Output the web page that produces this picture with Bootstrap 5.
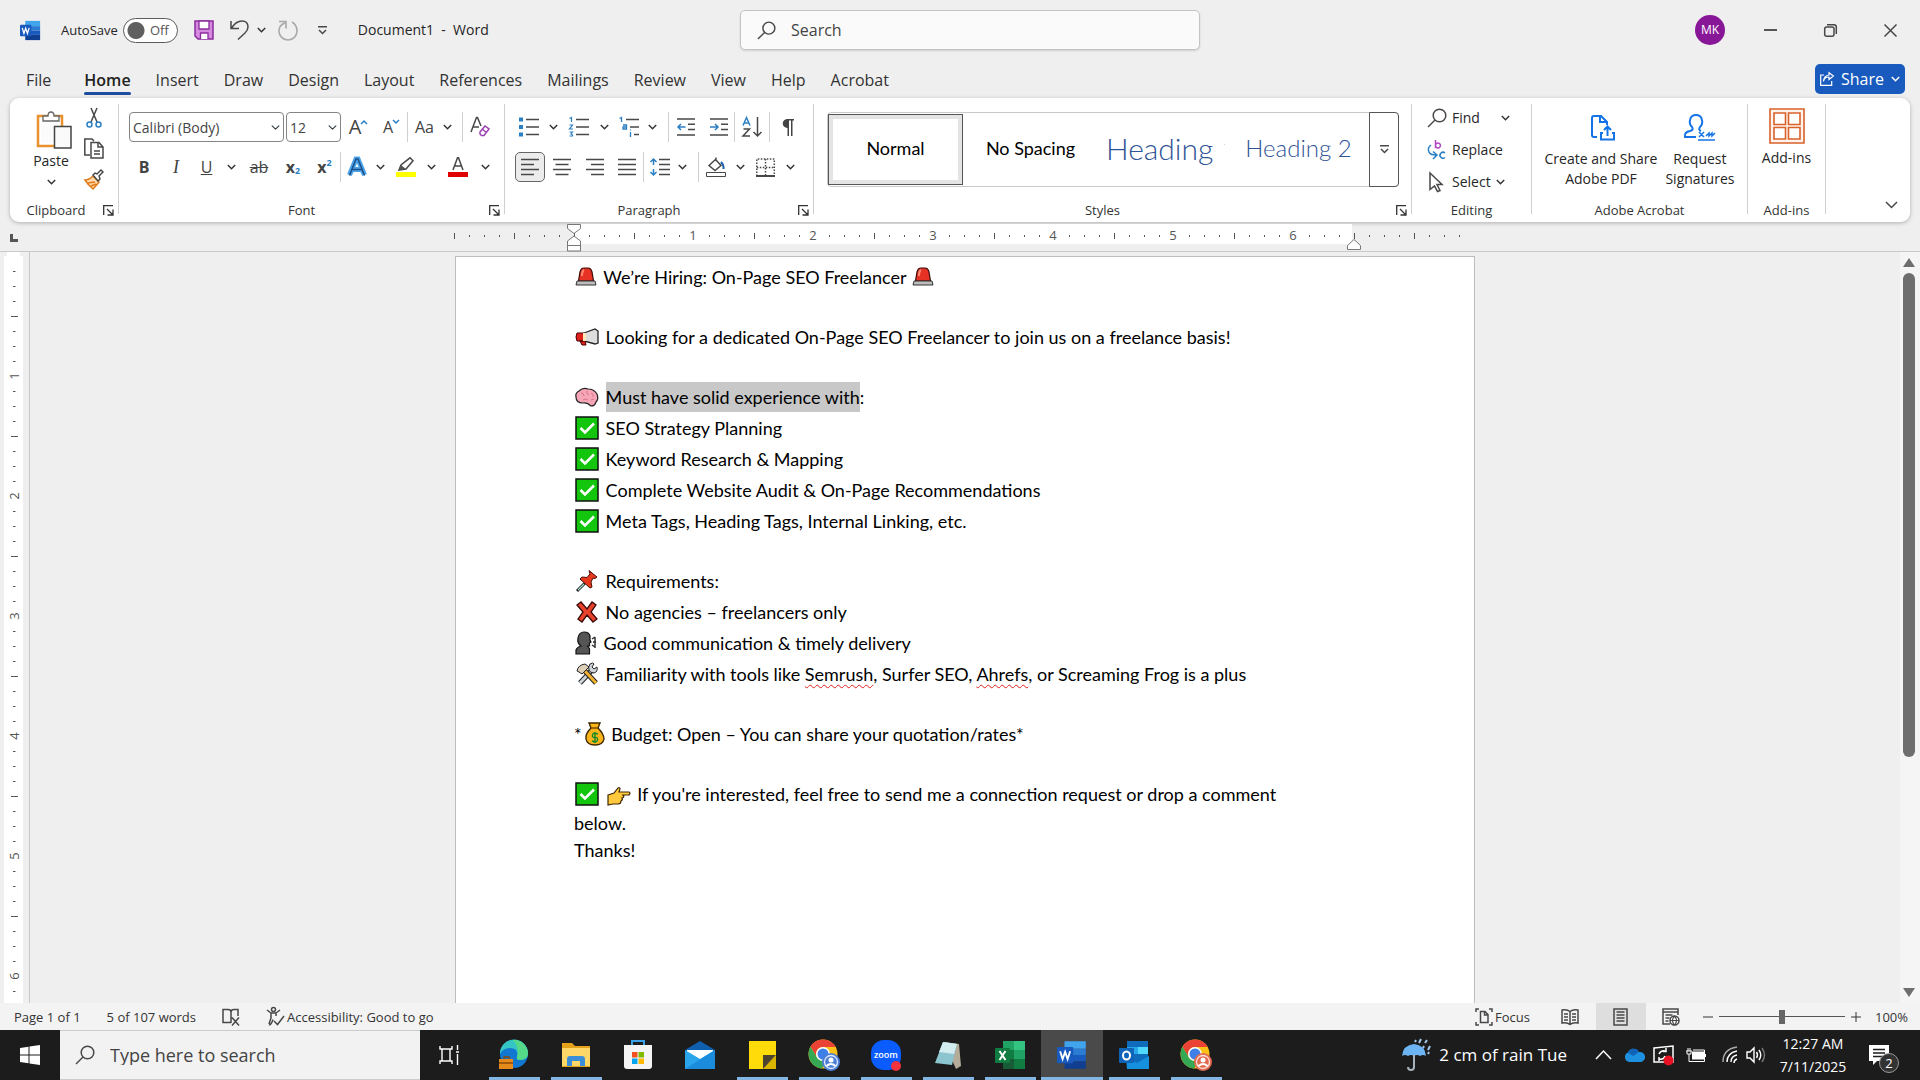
<!DOCTYPE html>
<html lang="en">
<head>
<meta charset="utf-8">
<meta name="viewport" content="width=device-width, initial-scale=1">
<title>Document1 - Word</title>
<link href="https://cdn.jsdelivr.net/npm/bootstrap@5.3.0/dist/css/bootstrap.min.css" rel="stylesheet">
<style>
:root{--ui:"Open Sans","Noto Sans",sans-serif;--doc:Lato,"Open Sans",sans-serif;--chrome:#efefef;--ink:#262626}
body{height:100vh;overflow:hidden;background:var(--chrome);font-family:var(--ui);font-size:14px;line-height:20px;color:var(--ink)}
svg{display:block;flex:none;overflow:visible}
button{color:inherit}
.tool{border:0;background:none;padding:0;display:inline-flex;align-items:center;justify-content:center}
.ln{fill:none;stroke:#484848;stroke-width:1.5}
.bl{stroke:#2b7fc3}
.chev{width:9px;height:6px;fill:none;stroke:#333;stroke-width:1.5}
.on-dark{stroke:#fff}
/* title bar */
.titlebar{height:60px;padding-left:20px}
.side{flex:1 1 0}
.autosave{font-size:13px;margin-left:20px;gap:5px}
.switch-box{appearance:none;width:55px;height:25px;margin:0;border:1px solid #5c5c5c;border-radius:13px;background:radial-gradient(circle at 12px 50%,#5f5f5f 8px,#fff 9px);display:block}
.switch-word{right:9px;top:2px;color:#555;pointer-events:none}
.quick{margin-left:16px}
.doc-name{margin-left:31px;font-size:14px}
.finder{width:460px;height:40px;background:#fafafa;border:1px solid #c4c4c4;border-radius:5px;padding-left:16px;gap:15px;box-shadow:0 1px 2px #0002}
.finder input,.task-search input{border:0;outline:0;background:none;padding:0;width:100%}
.finder input{font-size:16px}
.finder input::placeholder,.task-search input::placeholder{color:#444;opacity:1}
.win{width:60px;height:60px}
.avatar{width:30px;height:30px;border-radius:50%;background:#881798;color:#fff;font-size:12px}
/* tabs */
.tabs{height:38px;padding:4px 15px 4px 14px}
.tabs a{color:#333;text-decoration:none;font-size:16px;line-height:24px;padding:4px 13px 0 12px;height:32px}
.tabs a:first-child{margin-right:8px}
.tabs a.on{font-weight:600;color:#222}
.tabs a.on::after{content:"";display:block;height:3px;background:#1f4e9e;border-radius:2px}
.share{background:#185abd;color:#fff;width:90px;height:30px;border-radius:5px;font-size:16px;gap:7px}
/* ribbon */
.ribbon{margin:0 10px;height:124px;background:#fff;border-radius:9px;box-shadow:0 1px 4px #0004;padding:6px 0 8px;position:relative}
.grp{border-right:1px solid #cfcfcf;position:relative;display:flex;flex-direction:column;height:110px;flex:none}
.grp-name{margin-top:auto;text-align:center;font-size:13px;line-height:14px;padding-right:20px;margin-bottom:-3px;color:#333}
.grp-name.mid{padding-right:0}
.g-clip .grp-name{padding-right:16px}
.launch{position:absolute;right:4px;bottom:-2px}
.g-clip{width:109px}.g-font{width:386px}.g-para{width:309px}.g-style{width:598px}.g-edit{width:120px}.g-acro{width:216px}.g-add{width:78px}
.band{display:grid;align-items:center;justify-items:center;height:30px}
.band>.sep{width:1px;height:30px;background:#cfcfcf}
.font-a{margin-top:8px;padding-left:10px;grid-template-columns:155px 2px 55px 34px 32px 1px 33px 12px 9px 1px 34px}
.font-b{margin-top:10px;padding-left:9px;grid-template-columns:32px 32px 29px 20px 36px 32px 31px 1px 32px 14px 38px 12px 42px 12px}
.para-a{margin-top:8px;padding-left:9px;grid-template-columns:30px 18px 34px 16px 34px 12px 10px 1px 34px 31px 1px 34px 1px 34px}
.para-b{margin-top:10px;padding-left:10px;grid-template-columns:30px 34px 31px 33px 1px 32px 12px 10px 1px 34px 14px 36px 14px}
.band .form-select{height:30px;width:100%;padding:0 14px 0 3px;font-size:14px;font-family:var(--ui);border:1px solid #858585;border-radius:4px;background-size:9px;background-position:right 3px center;color:#444}
.band .picked{width:30px;height:30px;border:1px solid #666;border-radius:5px;background:#ececec}
.g16{font-size:16px;line-height:20px;color:#444}
.g20{font-size:20px;line-height:22px;color:#444}
.ital{font-family:"Liberation Serif",serif;font-size:18px}
.sup{font-size:9px;color:#2b7fc3}
.gallery{margin:8px 12px 0 13px;height:75px;border:1px solid #c9c9c9;border-radius:4px}
.tile{width:135px;height:71px;border:0;background:#fff;padding:0 8px 3px;margin-top:1px;font-family:var(--doc);font-size:18px;line-height:40px;color:#000;white-space:nowrap}
.tile span{display:block;overflow:hidden}
.tile.picked-style{border:1px solid #555;box-shadow:inset 0 0 0 4px #e4e4e4}
.tile.h-one{font-weight:300;font-size:30px;color:#2f5496;text-align:left}
.tile.h-two{font-weight:300;font-size:24px;color:#2f5496;padding:0 4px 3px 0}
.more{width:30px;height:75px;margin:-1px -1px 0 auto;border:1px solid #555;border-radius:0 4px 4px 0;background:#fff}
.edit-list{padding:4px 0 0 15px;gap:12px}
.edit-list button{gap:5px;height:20px;justify-content:flex-start}
.big{font-size:14px;line-height:20px;flex-direction:column}
.acro-pic{margin:2px 0 8px}
.collapse-rib{position:absolute;right:12px;bottom:13px}
/* rulers and page */
.hruler{height:30px;border-bottom:1px solid #c9c9c9;padding:0 20px 0 30px}
.corner-mark{left:10px;top:12px}
.vruler{width:30px;border-right:1px solid #c9c9c9;padding:4px 0 0 4px}
.vruler svg{height:100%}
.rnum{font:13px var(--ui);fill:#555;text-anchor:middle}
.desk{flex:1;min-height:0}
.sheet{width:1020px;margin-top:4px;background:#fff;border:1px solid #bdbdbd;border-bottom:0;padding:5px 110px 0 118px;font-family:var(--doc);font-size:18px;color:#000}
.sheet p{margin:0;line-height:31px;white-space:nowrap}
.sheet p.gap{height:29px}
.sheet p.tight{line-height:27px}
.emo{display:inline-block;width:24px;height:24px;margin:0 2px 0 1px;vertical-align:-5px}
.emo.slim{margin-right:0}
.picked-text{background:#c8c8c8;padding:4px 0}
.typo{text-decoration:underline wavy #e02020 1px;text-underline-offset:3px}
.vbar{width:20px;background:#f5f5f5;padding:6px 5px 6px 3px}
.vbar .thumb{width:12px;height:484px;border-radius:6px;background:#6e6e6e;margin-top:6px}
/* status bar */
.status{height:27px;background:#f3f3f3;font-size:13px;padding:0 12px 0 14px;color:#333}
.status button{font-size:13px;gap:2px;height:27px}
.st-next{margin-left:26px}
.st-read{margin:0 17px 0 31px}
.st-web{margin:0 23px 0 16px}
.st-pct{margin-left:14px}
.view-on{width:50px;background:#dedede!important}
.zoomer{appearance:none;width:126px;height:14px;background:linear-gradient(#555,#555) center/100% 1px no-repeat;margin:0 6px}
.zoomer::-webkit-slider-thumb{appearance:none;width:6px;height:14px;background:#666;border-radius:0}
/* task bar */
.taskbar{height:50px;background:#1c1c1c;color:#fff}
.task-search{width:360px;height:50px;background:#f2f2f2;border:1px solid #ccc;border-width:1px 0;padding-left:15px;gap:15px;color:#222}
.task-search input{font-size:18px}
.views{width:63px;height:50px;padding-right:4px}
.app{width:62px;height:50px;position:relative}
.app.open::after{content:"";position:absolute;left:6px;right:5px;bottom:0;height:3px;background:#83b6e2}
.app.now{background:#4a4a4a}
.app.now::after{left:0;right:0}
.tray{font-size:14px}
.weather{font-size:17px;gap:8px;margin-right:28px}
.clock{width:80px;line-height:23px;text-align:center;margin-left:7px}
.bell{margin:0 31px 0 16px}
.note-count{left:10px;top:8px;width:20px;height:20px;border-radius:50%;background:#333;border:1px solid #999;font-size:13px;line-height:18px;text-align:center}
</style>
<script src="https://cdn.jsdelivr.net/npm/bootstrap@5.3.0/dist/js/bootstrap.bundle.min.js"></script>
</head>
<body class="d-flex flex-column">
<svg width="0" height="0" class="position-absolute" aria-hidden="true">
<symbol id="cv" viewBox="0 0 9 6"><path d="M.8 1l3.700 3.700L8.200 1"/></symbol>
<symbol id="la" viewBox="0 0 11 11"><path d="M.7 10V.7H10M4 4l5.500 5.500M10 4.500V10H4.500" fill="none" stroke="#333" stroke-width="1.300"/></symbol>
<symbol id="mag" viewBox="0 0 20 20"><circle cx="12.500" cy="7.500" r="6.300"/><path d="M8 12L1 19"/></symbol>
<symbol id="tick" viewBox="0 0 24 24"><rect x="1" y="1" width="22" height="22" fill="#13c60d" stroke="#111" stroke-width="1.500"/><path d="M5.500 12l4.500 4.500L19 7.500" fill="none" stroke="#fff" stroke-width="2.600"/></symbol>
<symbol id="siren" viewBox="0 0 24 24"><path d="M3.500 16L5 7q1-4 4-4h4q3 0 4 4l1.500 9z" fill="#e53224" stroke="#3a0a08" stroke-width="1.200"/><path d="M9 5q-2 1-2 6" stroke="#ff8a70" stroke-width="2" fill="none"/><path d="M2 16h18l1 4H1z" fill="#bdbdbd" stroke="#333"/></symbol>
<symbol id="word" viewBox="0 0 24 24"><path d="M6 1h17v6H6z" fill="#41a5ee"/><path d="M6 7h17v5H6z" fill="#2b7cd3"/><path d="M6 12h17v5H6z" fill="#185abd"/><path d="M6 17h17v6H6z" fill="#103f91"/><rect y="5.500" width="13" height="13" rx="1" fill="#185abd"/><path d="M2.500 9l2 6.300L6.500 9.500l2 5.800 2-6.300" fill="none" stroke="#fff" stroke-width="1.500"/></symbol>
<symbol id="chrome" viewBox="0 0 32 32"><circle cx="15" cy="15" r="14.500" fill="#fbc116"/><path d="M2.500 7.800A14.500 14.500 0 0 1 27.700 8H15a7 7 0 0 0-6.300 10z" fill="#ea4335"/><path d="M2.500 7.800A14.500 14.500 0 0 0 14 29.500l6.500-11A7 7 0 0 1 8.700 18z" fill="#34a853"/><circle cx="15" cy="15" r="7" fill="#fff"/><circle cx="15" cy="15" r="5.500" fill="#3f7fe8"/></symbol>
<pattern id="hp" width="60" height="24" patternUnits="userSpaceOnUse"><path d="M.5 9v6M15.500 11v2M30.500 11v2M45.500 11v2" stroke="#555"/></pattern>
<pattern id="vp" width="20" height="60" patternUnits="userSpaceOnUse"><path d="M7 .5h7M9 15.500h2.500M9 30.500h2.500M9 45.500h2.500" stroke="#555"/></pattern>
</svg>

<header class="titlebar d-flex align-items-center">
  <div class="side d-flex align-items-center">
    <svg width="21" height="21"><use href="#word"/></svg>
    <label class="autosave d-flex align-items-center" for="auto"><span>AutoSave</span><span class="position-relative"><input class="switch-box" type="checkbox" id="auto"><span class="switch-word position-absolute">Off</span></span></label>
    <div class="quick d-flex align-items-center">
      <button class="tool" aria-label="Save"><svg width="20" height="20" viewBox="0 0 20 20"><path d="M1 1h18v18H4l-3-3z" fill="#d58ae0" stroke="#8a2c9c" stroke-width="1.500"/><path d="M5 1h10v8H5zM6.500 19v-6h7.500v6" fill="#fff" stroke="#8a2c9c" stroke-width="1.300"/></svg></button>
      <button class="tool ms-3" aria-label="Undo"><svg width="19" height="20" viewBox="0 0 19 20" class="ln"><path d="M1 1v7.500h8M1.500 8Q6 1 12 1t6 6q0 3-3 6l-7 6.500"/></svg></button>
      <button class="tool ms-2" aria-label="Undo list"><svg class="chev"><use href="#cv"/></svg></button>
      <button class="tool ms-2 ps-1" aria-label="Redo"><svg width="20" height="20" viewBox="0 0 20 20"><path d="M1 1.500h7v7M7 3Q1 5 1 11a9 9 0 0 0 18 0q0-6-5-9" fill="none" stroke="#a8a8a8" stroke-width="1.600"/></svg></button>
      <button class="tool ms-3 ps-1" aria-label="Customize"><svg width="9" height="9" viewBox="0 0 9 9" class="ln"><path d="M0 .7h9M1 4l3.500 3.500L8 4"/></svg></button>
    </div>
    <span class="doc-name">Document1&nbsp; -&nbsp; Word</span>
  </div>
  <div class="finder d-flex align-items-center"><svg width="19" height="19" class="ln"><use href="#mag"/></svg><input type="text" placeholder="Search" aria-label="Search"></div>
  <div class="side d-flex align-items-center justify-content-end">
    <button class="tool win" aria-label="Account"><span class="avatar d-flex align-items-center justify-content-center">MK</span></button>
    <button class="tool win" aria-label="Minimize"><svg width="13" height="2"><path d="M0 1h13" stroke="#222" stroke-width="1.500"/></svg></button>
    <button class="tool win" aria-label="Restore"><svg width="13" height="13" viewBox="0 0 13 13" class="ln"><rect x=".7" y="3" width="9.300" height="9.300" rx="2"/><path d="M3 .7h7q2.300 0 2.300 2.300v7"/></svg></button>
    <button class="tool win" aria-label="Close"><svg width="13" height="13" class="ln"><path d="M.5.5l12 12M12.500.5l-12 12"/></svg></button>
  </div>
</header>

<nav class="tabs d-flex align-items-start">
  <a href="#">File</a><a href="#" class="on">Home</a><a href="#">Insert</a><a href="#">Draw</a><a href="#">Design</a><a href="#">Layout</a><a href="#">References</a><a href="#">Mailings</a><a href="#">Review</a><a href="#">View</a><a href="#">Help</a><a href="#">Acrobat</a>
  <button class="tool share ms-auto"><svg width="14" height="14" viewBox="0 0 14 14" fill="none" stroke="#fff" stroke-width="1.200"><path d="M4 3H.7v10.300h11V9M3.500 9.500Q4 5 9 5V7.500L13.400 4 9 .7V3Q4 3.500 3.500 9.500"/></svg>Share<svg class="chev on-dark"><use href="#cv"/></svg></button>
</nav>

<section class="ribbon d-flex">
  <div class="grp g-clip">
    <div class="d-flex">
      <button class="tool big ms-3" aria-label="Paste"><svg width="50" height="42" viewBox="0 0 50 42"><path d="M12 7h24v30H12z" fill="#fff" stroke="#e8912d" stroke-width="2.500"/><path d="M15 10h18v24H15z" fill="#fbfbfb"/><path d="M17 12V7h5q0-4 3-4t3 4h5v5z" fill="#fff" stroke="#666" stroke-width="1.300"/><path d="M28.500 17.500h16.500v21.500H28.500z" fill="#fafafa" stroke="#444" stroke-width="1.500"/></svg><span>Paste</span><svg class="chev mt-2"><use href="#cv"/></svg></button>
      <div class="d-flex flex-column align-items-center ms-2 pt-1 gap-2">
        <button class="tool" aria-label="Cut"><svg width="20" height="22" viewBox="0 0 20 22" class="ln"><path d="M7 0l6 14M13 0L7 14"/><circle cx="5.500" cy="16.500" r="2.500" class="bl"/><circle cx="14.500" cy="16.500" r="2.500" class="bl"/></svg></button>
        <button class="tool" aria-label="Copy"><svg width="20" height="22" viewBox="0 0 20 22" class="ln"><path d="M6 17H.8V1H8l2 2M7 4.500h8l4 4.500v11H7zM14 4.500V9h5M10 13h6M10 16h6"/></svg></button>
        <button class="tool" aria-label="Format Painter"><svg width="20" height="22" viewBox="0 0 20 22"><path d="M1 12q4 0 8-4l6 6q-3 4-6 7-5-4-8-9z" fill="#ffd9a8" stroke="#e07a1a" stroke-width="1.500"/><path d="M4 15l7-1M7 18l5-2" stroke="#e07a1a" stroke-width="1.500"/><path d="M9 7l2-2 2 1 4-4 2 2-4 4 1 3-2 2z" fill="#fff" stroke="#444" stroke-width="1.400"/></svg></button>
      </div>
    </div>
    <div class="grp-name">Clipboard</div><button class="tool launch" aria-label="Clipboard options"><svg width="11" height="11"><use href="#la"/></svg></button>
  </div>
  <div class="grp g-font">
    <div class="band font-a">
      <select class="form-select" aria-label="Font"><option>Calibri (Body)</option></select><span></span>
      <select class="form-select" aria-label="Font size"><option>12</option></select>
      <button class="tool g20" aria-label="Grow font">A<svg width="6" height="20" class="ln"><path class="bl" d="M0 7l3-3 3 3"/></svg></button>
      <button class="tool g16" aria-label="Shrink font">A<svg width="6" height="20" class="ln"><path class="bl" d="M0 3l3 3 3-3"/></svg></button>
      <span class="sep"></span><button class="tool g16">Aa</button><svg class="chev"><use href="#cv"/></svg><span></span><span class="sep"></span>
      <button class="tool g20" aria-label="Clear formatting"><svg width="20" height="22" viewBox="0 0 20 22" class="ln"><path d="M1 16L6.500 1.500h1L11 10M3 11h6"/><path d="M10 16l5-6 4 3-5 6.500h-2.500L10 18z" stroke="#9b3fb0"/><path d="M12 13l4.500 3.500" stroke="#9b3fb0"/></svg></button>
    </div>
    <div class="band font-b">
      <button class="tool g16 fw-bold">B</button><button class="tool g16 ital fst-italic">I</button><button class="tool g16 text-decoration-underline">U</button><svg class="chev"><use href="#cv"/></svg>
      <button class="tool g16 text-decoration-line-through">ab</button>
      <button class="tool g16 fw-bold" aria-label="Subscript">x<span class="sup mt-2">2</span></button><button class="tool g16 fw-bold" aria-label="Superscript">x<span class="sup mb-2">2</span></button>
      <span class="sep"></span>
      <button class="tool" aria-label="Text effects"><svg width="20" height="20" viewBox="0 0 20 20"><path d="M2.500 18L9 2h2l6.500 16M5.500 12.500h9" fill="none" stroke="#4aa3e8" stroke-width="5"/><path d="M2.500 18.500L9 2h2l6.500 16.500M5.500 12.500h9" fill="none" stroke="#1c4f8c" stroke-width="1.500"/></svg></button><svg class="chev"><use href="#cv"/></svg>
      <button class="tool" aria-label="Highlight"><svg width="20" height="20" viewBox="0 0 20 20"><path d="M3 13l2-5L14 .8l3 3L10 12z" class="ln"/><path d="M3 13l2-5 5 4z" fill="#555"/><path d="M0 15h20v5H0z" fill="#ff0"/></svg></button><svg class="chev"><use href="#cv"/></svg>
      <button class="tool" aria-label="Font color"><svg width="20" height="20" viewBox="0 0 20 20"><path d="M5 13L9.500.8h1L15 13M6.500 9h7" class="ln"/><path d="M0 15h20v5H0z" fill="#e00000"/></svg></button><svg class="chev"><use href="#cv"/></svg>
    </div>
    <div class="grp-name">Font</div><button class="tool launch" aria-label="Font options"><svg width="11" height="11"><use href="#la"/></svg></button>
  </div>
  <div class="grp g-para">
    <div class="band para-a">
      <button class="tool" aria-label="Bullets"><svg width="20" height="20" viewBox="0 0 20 20"><path d="M7 2.500h13M7 10h13M7 17.500h13" class="ln"/><path d="M0 .5h4v4H0zM0 8h4v4H0zM0 15.500h4v4H0z" fill="#2b7fc3"/></svg></button><svg class="chev"><use href="#cv"/></svg>
      <button class="tool" aria-label="Numbering"><svg width="20" height="20" viewBox="0 0 20 20" class="ln"><path d="M7 2.500h13M7 10h13M7 17.500h13"/><path class="bl" d="M.5 1.500L2.500.5V5M.5 8h3l-3 4h3.500M.5 15h3l-1.500 2q2 .5 1.500 2H.5" stroke-width="1.200"/></svg></button><svg class="chev"><use href="#cv"/></svg>
      <button class="tool" aria-label="Multilevel list"><svg width="20" height="20" viewBox="0 0 20 20" class="ln"><path d="M7 2.500h13M11 10h9M15 17.500h5"/><path class="bl" d="M.5 1.500L2.500.5V5M4 8h3.500v4H4v-2h3.500M11.500 15v5M11.500 12.500v1" stroke-width="1.300"/></svg></button><svg class="chev"><use href="#cv"/></svg>
      <span></span><span class="sep"></span>
      <button class="tool" aria-label="Decrease indent"><svg width="18" height="18" viewBox="0 0 18 18" class="ln"><path d="M0 1h18M11 6.300h7M11 11.600h7M0 17h18"/><path class="bl" d="M8.500 9H1M4 6L1 9l3 3"/></svg></button>
      <button class="tool" aria-label="Increase indent"><svg width="18" height="18" viewBox="0 0 18 18" class="ln"><path d="M0 1h18M11 6.300h7M11 11.600h7M0 17h18"/><path class="bl" d="M0 9h7.500M5 6l3 3-3 3"/></svg></button>
      <span class="sep"></span>
      <button class="tool" aria-label="Sort"><svg width="20" height="20" viewBox="0 0 20 20" class="ln"><path class="bl" d="M1 8.500L4.500.5 8 8.500M2 6h5"/><path d="M1.500 12H7.500L1 19h7M15.500 0v19M11.500 15l4 4 4-4"/></svg></button>
      <span class="sep"></span>
      <button class="tool" aria-label="Show marks"><svg width="13" height="17" viewBox="0 0 13 17"><path d="M6 0h7v1.500h-1.500V17h-1.500V1.500H8V17H6.500V9A4.500 4.500 0 0 1 6 0z" fill="#444"/></svg></button>
    </div>
    <div class="band para-b">
      <button class="tool picked" aria-label="Align left"><svg width="18" height="18" class="ln"><path d="M0 1.500h18M0 6.500h13M0 11.500h18M0 16.500h13"/></svg></button>
      <button class="tool" aria-label="Center"><svg width="18" height="18" class="ln"><path d="M0 1.500h18M2.500 6.500h13M0 11.500h18M2.500 16.500h13"/></svg></button>
      <button class="tool" aria-label="Align right"><svg width="18" height="18" class="ln"><path d="M0 1.500h18M5 6.500h13M0 11.500h18M5 16.500h13"/></svg></button>
      <button class="tool" aria-label="Justify"><svg width="18" height="18" class="ln"><path d="M0 1.500h18M0 6.500h18M0 11.500h18M0 16.500h18"/></svg></button>
      <span class="sep"></span>
      <button class="tool" aria-label="Line spacing"><svg width="20" height="18" class="ln"><path d="M9 1.500h11M9 6.500h11M9 11.500h11M9 16.500h11"/><path class="bl" d="M3.500 1v6M.5 4l3-3 3 3M3.500 11v6M.5 14l3 3 3-3"/></svg></button><svg class="chev"><use href="#cv"/></svg>
      <span></span><span class="sep"></span>
      <button class="tool" aria-label="Shading"><svg width="20" height="20" viewBox="0 0 20 20" class="ln"><path d="M3 8.500L9.500 2.500l5.500 6-6 5zM10 4V.5"/><path d="M15 5q3 3 2.500 7" stroke="#1c5fa8" stroke-width="2"/><path d="M.5 15.500h19v4H.5z" stroke-width="1"/></svg></button><svg class="chev"><use href="#cv"/></svg>
      <button class="tool" aria-label="Borders"><svg width="19" height="19" class="ln"><path d="M.8 18V1h17.500v17M.8 9.500h17.500M9.500 1v17" stroke-dasharray="1.500 1.500"/><path d="M0 18h19" stroke-width="2"/></svg></button><svg class="chev"><use href="#cv"/></svg>
    </div>
    <div class="grp-name">Paragraph</div><button class="tool launch" aria-label="Paragraph options"><svg width="11" height="11"><use href="#la"/></svg></button>
  </div>
  <div class="grp g-style">
    <div class="gallery d-flex">
      <button class="tile picked-style"><span>Normal</span></button><button class="tile"><span>No Spacing</span></button><button class="tile h-one"><span>Heading 1</span></button><button class="tile h-two"><span>Heading 2</span></button>
      <button class="more tool" aria-label="More styles"><svg width="9" height="9" viewBox="0 0 9 9" class="ln"><path d="M0 .7h9M1 4l3.500 3.500L8 4"/></svg></button>
    </div>
    <div class="grp-name">Styles</div><button class="tool launch" aria-label="Style options"><svg width="11" height="11"><use href="#la"/></svg></button>
  </div>
  <div class="grp g-edit">
    <div class="edit-list d-flex flex-column">
      <button class="tool"><svg width="20" height="20" class="ln"><use href="#mag"/></svg>Find<svg class="chev ms-3"><use href="#cv"/></svg></button>
      <button class="tool"><svg width="20" height="20" viewBox="0 0 20 20" class="ln"><path d="M8.500 0v8M8.500 5a2.500 2.500 0 1 1 0 1" stroke="#b146c2"/><path d="M18 13a3 3 0 1 0 0 4.500" class="bl"/><path d="M4 5q-4 3-2 7 1 3 7 3M6 11.500l4 3.500-4 4" class="bl"/></svg>Replace</button>
      <button class="tool"><svg width="20" height="20" viewBox="0 0 20 20" class="ln"><path d="M3 1l12 11.500H10l3 6-2.500 1L7.500 14 3 17.500z"/></svg>Select<svg class="chev"><use href="#cv"/></svg></button>
    </div>
    <div class="grp-name mid">Editing</div>
  </div>
  <div class="grp g-acro">
    <div class="d-flex justify-content-center gap-2 pt-2">
      <button class="tool big"><svg width="26" height="27" viewBox="0 0 26 27" class="acro-pic" fill="none" stroke="#1473e6" stroke-width="2"><path d="M9 23H6q-2 0-2-2V4q0-2 2-2h7l6 6v3M12 2v6h7"/><path d="M15 19h-2v6.500h13V19h-2M19.500 22v-9M16 16l3.500-3.500L23 16"/></svg><span>Create and Share<br>Adobe PDF</span></button>
      <button class="tool big"><svg width="31" height="27" viewBox="0 0 31 27" class="acro-pic" fill="none" stroke="#1473e6" stroke-width="2"><path d="M12 23H1q-1-5 5-6 4-1 2-4-3-3-2-7 1-5 6-5t6 5q1 4-2 7-2 3 1 4"/><path d="M14 26h17M15 18l5 5M20 18l-5 5M22 22l3-3v3l3-3v3l3-3" stroke-width="1.500"/></svg><span>Request<br>Signatures</span></button>
    </div>
    <div class="grp-name mid">Adobe Acrobat</div>
  </div>
  <div class="grp g-add">
    <div class="d-flex justify-content-center pt-1"><button class="tool big"><svg width="36" height="36" viewBox="0 0 36 36" class="mb-1" fill="none" stroke="#d9622b" stroke-width="1.600"><path d="M1 1h34v34H1z" fill="#fff3ec"/><path d="M5 5h11.500v11.500H5zM19.500 5H31v11.500H19.500zM5 19.500h11.500V31H5zM19.500 19.500H31V31H19.500z" fill="#fff"/></svg><span>Add-ins</span></button></div>
    <div class="grp-name mid">Add-ins</div>
  </div>
  <button class="tool collapse-rib" aria-label="Collapse ribbon"><svg width="13" height="8" class="ln"><path d="M1 1l5.500 5.500L12 1"/></svg></button>
</section>

<div class="hruler position-relative d-flex justify-content-center">
  <svg class="corner-mark position-absolute" width="8" height="8"><path d="M1.500 0v6.500H8" fill="none" stroke="#555" stroke-width="3"/></svg>
  <svg width="1022" height="30">
    <path d="M120 2h778v20H120z" fill="#fff"/>
    <g transform="translate(0 2)"><path d="M0 0h1007v24H0z" fill="url(#hp)"/></g>
    <path d="M232 5h14v16h-14zM352 5h14v16h-14zM472 5h14v16h-14zM592 5h14v16h-14zM712 5h14v16h-14zM832 5h14v16h-14z" fill="#fff"/>
    <g class="rnum"><text x="239" y="18">1</text><text x="359" y="18">2</text><text x="479" y="18">3</text><text x="599" y="18">4</text><text x="719" y="18">5</text><text x="839" y="18">6</text></g>
    <g fill="#fff" stroke="#777"><path d="M113.500 2.500h13v4l-6.500 5-6.500-5zM113.500 23v-4l6.500-5 6.500 5v10h-13zM113.500 23.500h13M893.500 27.500v-4l6.500-6 6.500 6v4z"/></g>
  </svg>
</div>

<main class="desk d-flex">
  <div class="vruler"><svg width="19"><rect width="19" height="100%" fill="#fff"/><rect width="19" height="100%" fill="url(#vp)"/>
    <path d="M3 -4h13v8H3zM3 113h13v14H3zM3 233h13v14H3zM3 353h13v14H3zM3 473h13v14H3zM3 593h13v14H3zM3 713h13v14H3z" fill="#fff"/>
    <g class="rnum"><text transform="translate(15 120) rotate(-90)">1</text><text transform="translate(15 240) rotate(-90)">2</text><text transform="translate(15 360) rotate(-90)">3</text><text transform="translate(15 480) rotate(-90)">4</text><text transform="translate(15 600) rotate(-90)">5</text><text transform="translate(15 720) rotate(-90)">6</text></g></svg></div>
  <div class="flex-grow-1 d-flex justify-content-center overflow-hidden">
    <article class="sheet">
      <p><svg class="emo slim"><use href="#siren"/></svg> We’re Hiring: On-Page SEO Freelancer <svg class="emo slim"><use href="#siren"/></svg></p>
      <p class="gap"></p>
      <p><svg class="emo" viewBox="0 0 24 24"><path d="M9 8l11-4 3 2v12l-3 1-11-3z" fill="#ddd" stroke="#222" stroke-width="1.300"/><path d="M2 8h7v8H2q-2-4 0-8zM5 16h5l1 4H7z" fill="#e0201b" stroke="#400" /><path d="M8 8h3v8H8z" fill="#ffe8b8"/></svg> Looking for a dedicated On-Page SEO Freelancer to join us on a freelance basis!</p>
      <p class="gap"></p>
      <p><svg class="emo" viewBox="0 0 24 24"><path d="M1 12q-1-4 3-6 4-4 9-2 6 0 9 5 2 5-1 8-1 4-5 4-4-4-8-3-7 0-7-6z" fill="#f6a6b6" stroke="#222" stroke-width="1.200"/><path d="M6 8q3 0 3 3M12 6q-1 3 2 4M16 8q3 1 2 4M8 15q3-2 5 0M16 15l3-1" fill="none" stroke="#d9718a"/></svg> <span class="picked-text">Must have solid experience with</span>:</p>
      <p><svg class="emo"><use href="#tick"/></svg> SEO Strategy Planning</p>
      <p><svg class="emo"><use href="#tick"/></svg> Keyword Research &amp; Mapping</p>
      <p><svg class="emo"><use href="#tick"/></svg> Complete Website Audit &amp; On-Page Recommendations</p>
      <p><svg class="emo"><use href="#tick"/></svg> Meta Tags, Heading Tags, Internal Linking, etc.</p>
      <p class="gap"></p>
      <p><svg class="emo" viewBox="0 0 24 24"><path d="M10 14L2 22" stroke="#222" stroke-width="3"/><path d="M9 15L3 21" stroke="#9fe0d0" stroke-width="1.200"/><path d="M14 1.500l8 6.500-2 1.500-2-.5-2 4 1 5-2 1L5 10l2-2 5 .5 3-3.500z" fill="#e8391f" stroke="#4a0d05"/></svg> Requirements:</p>
      <p><svg class="emo" viewBox="0 0 24 24"><path d="M2 5l4-3 6 7 5-7 4 3-5 7 6 7-4 3-6-7-5 7-4-3 5-7z" fill="#e8412c" stroke="#3a0a08" stroke-width="1.300"/></svg> No agencies – freelancers only</p>
      <p><svg class="emo slim" viewBox="0 0 24 24"><path d="M1 23v-4q1-3 5-4-4-3-3-8 1-6 6-6 5 0 6 4v4l1 2-1.500 1v3H12q2 1 2.500 3v5z" fill="#555" stroke="#111" stroke-width="1.200"/><path d="M17 8l3-2M18 11h3M17 14l3 2M20 6v11" stroke="#333" stroke-width="1.500"/></svg> Good communication &amp; timely delivery</p>
      <p><svg class="emo" viewBox="0 0 24 24"><path d="M18 7L5 21" stroke="#222" stroke-width="5"/><path d="M18 7L5 21" stroke="#cfd4d8" stroke-width="3"/><path d="M15 2q3-2 4 0l-2 3 2 2 3-2q1 5-3 6-4 0-5-3-1-3 1-6z" fill="#cfd4d8" stroke="#222"/><path d="M9 8l12 13" stroke="#222" stroke-width="5"/><path d="M9 8l12 13" stroke="#f0b030" stroke-width="3"/><path d="M2 9q1-6 8-7l4 3-7 7-3-2z" fill="#ddd0b8" stroke="#222"/></svg> Familiarity with tools like <span class="typo">Semrush</span>, Surfer SEO, <span class="typo">Ahrefs</span>, or Screaming Frog is a plus</p>
      <p class="gap"></p>
      <p>*<svg class="emo slim" viewBox="0 0 24 24"><path d="M6 1h11l-2 5q6 6 6 11-1 6-9 6t-9-6q-1-5 5-11z" fill="#f9b41a" stroke="#3d2800" stroke-width="1.400"/><path d="M8 6h7" stroke="#7a4b00" stroke-width="1.500"/><path d="M15 12q-5-2-5.500 1t2.500 2.500 2.500 2.500-5.500 1M12 10v11" fill="none" stroke="#178a2a" stroke-width="1.400"/></svg> Budget: Open – You can share your quotation/rates*</p>
      <p class="gap"></p>
      <p><svg class="emo"><use href="#tick"/></svg> <svg class="emo" viewBox="0 0 24 24"><path d="M1 13l6-2 4-5q2-1 2 1l-1 3h10q2 1 0 3h-6q2 2-1 3 1 2-1 3 0 3-3 3H6l-5 1z" fill="#ffc83d" stroke="#3d2800" stroke-width="1.200"/></svg> If you're interested, feel free to send me a connection request or drop a comment</p>
      <p class="tight">below.</p>
      <p class="tight">Thanks!</p>
    </article>
  </div>
  <div class="vbar d-flex flex-column align-items-center"><svg width="12" height="9"><path d="M6 0l6 9H0z" fill="#6e6e6e"/></svg><div class="thumb"></div><svg class="mt-auto" width="12" height="9"><path d="M0 0h12L6 9z" fill="#6e6e6e"/></svg></div>
</main>

<footer class="status d-flex align-items-center">
  <span>Page 1 of 1</span><span class="st-next">5 of 107 words</span>
  <button class="tool st-next" aria-label="Proofing"><svg width="18" height="18" viewBox="0 0 18 18" class="ln"><path d="M9 14.500H1V1.500h5q3 0 3 2.500v11M9 4q0-2.500 3-2.500h4V8M10 9.500l7 8M17 9.500l-7 8"/></svg></button>
  <button class="tool st-next"><svg width="19" height="19" viewBox="0 0 19 19" class="ln"><circle cx="7.500" cy="2.500" r="2"/><path d="M1 3l4 3v5l-2 6M14 3l-4 3v3M5 6h5M3 17.500q2 1 4-5M8 14l3.500 3.500L18 9"/></svg>Accessibility: Good to go</button>
  <button class="tool ms-auto"><svg width="18" height="18" viewBox="0 0 18 18" class="ln"><path d="M4 1H1v3M14 1h3v3M1 14v3h3M17 14v3h-3M5.500 3.500h4.500l3 3v8H5.500zM9.500 3.500V7H13"/></svg>Focus</button>
  <button class="tool st-read" aria-label="Read mode"><svg width="18" height="18" viewBox="0 0 18 18" class="ln"><path d="M9 3.500Q6 1 1 2v13q5-1 8 1.500Q12 14 17 15V2q-5-1-8 1.500zV16M3 6h4M3 9h4M3 12h4M11 6h4M11 9h4M11 12h4"/></svg></button>
  <button class="tool view-on" aria-label="Print layout"><svg width="15" height="18" class="ln"><path d="M1 1h13v16H1zM3.500 4h8M3.500 7h8M3.500 10h8M3.500 13h8"/></svg></button>
  <button class="tool st-web" aria-label="Web layout"><svg width="18" height="18" viewBox="0 0 18 18" class="ln"><path d="M8 16H1V1h15v6M1 4h15M3.500 7h7M3.500 10h4M3.500 13h3"/><circle cx="12.500" cy="12.500" r="4.500" fill="#fff"/><path d="M8 12.500h9M12.500 8q-4 4.500 0 9M12.500 8q4 4.500 0 9" stroke-width="1.200"/></svg></button>
  <button class="tool" aria-label="Zoom out"><svg width="10" height="10"><path d="M0 5h10" stroke="#333"/></svg></button>
  <input class="zoomer" type="range" min="0" max="100" value="50" aria-label="Zoom">
  <button class="tool" aria-label="Zoom in"><svg width="10" height="10"><path d="M0 5h10M5 0v10" stroke="#333"/></svg></button>
  <span class="st-pct">100%</span>
</footer>

<footer class="taskbar d-flex align-items-center">
  <button class="tool win" aria-label="Start"><svg width="20" height="20" viewBox="0 0 20 20" fill="#fff"><path d="M0 3l8.500-1.200v7.700H0zM9.500 1.600L20 0v9.500H9.500zM0 10.500h8.500v7.700L0 17zM9.500 10.500H20V20L9.500 18.400z"/></svg></button>
  <div class="task-search d-flex align-items-center"><svg width="20" height="20" class="ln"><use href="#mag"/></svg><input type="text" placeholder="Type here to search" aria-label="Type here to search"></div>
  <button class="tool views" aria-label="Task view"><svg width="21" height="20" viewBox="0 0 21 20" fill="none" stroke="#fff" stroke-width="1.400"><path d="M1 1v3h12V1M1 19v-3h12v3M3 4v12h8M11 4v12M18.500 0v5M18.500 9v11M17 7h3"/></svg></button>
  <button class="tool app open" aria-label="Edge"><svg width="30" height="30" viewBox="0 0 30 30"><circle cx="15" cy="14" r="14" fill="#1177d0"/><path d="M1 14A14 14 0 0 1 29 13q0 7-8 7-4 0-3-3Q20 8 11 8 4 8 1 14z" fill="#35c5c5"/><path d="M14 0a14 14 0 0 1 15 13q0 7-8 7-4 0-3-3Q21 8 14 0z" fill="#55d988"/><path d="M0 19h14v10H0z" fill="#e68a1c"/><path d="M5 19v-2h5v2M0 23h14" stroke="#8c4a06" fill="none" stroke-width="1.300"/></svg></button>
  <button class="tool app open" aria-label="File Explorer"><svg width="28" height="24" viewBox="0 0 28 24"><path d="M0 0h10l3 3h15v21H0z" fill="#e3a21a"/><path d="M0 5h28v18H0z" fill="#ffd768"/><path d="M5 23v-7q0-3 3-3h12q3 0 3 3v7h-5v-5h-8v5z" fill="#3c8ed6"/></svg></button>
  <button class="tool app" aria-label="Store"><svg width="30" height="30" viewBox="0 0 30 30"><path d="M9 6V1h12v5" fill="none" stroke="#3ba0e6" stroke-width="2"/><path d="M1 5h28v21q0 3-3 3H4q-3 0-3-3z" fill="#f4f4f4"/><path d="M9 12h5.500v5.500H9z" fill="#f25022"/><path d="M15.500 12H21v5.500h-5.500z" fill="#7fba00"/><path d="M9 18.500h5.500V24H9z" fill="#00a4ef"/><path d="M15.500 18.500H21V24h-5.500z" fill="#ffb900"/></svg></button>
  <button class="tool app" aria-label="Mail"><svg width="30" height="28" viewBox="0 0 30 28"><path d="M0 9L15 0l15 9v6H0z" fill="#0f5fae"/><path d="M2 9h26v10H2z" fill="#fff"/><path d="M0 9l15 9 15-9v19H0z" fill="#2aa4ea"/><path d="M0 28L30 9v19z" fill="#1b8bdc"/></svg></button>
  <button class="tool app open" aria-label="Sticky Notes"><svg width="27" height="28" viewBox="0 0 27 28"><path d="M0 0h27v14L14 28H0z" fill="#ffdb0a"/><path d="M14 14h13L14 28z" fill="#4b4330"/><path d="M27 14v14H14z" fill="#d9b400"/></svg></button>
  <button class="tool app open" aria-label="Chrome"><svg width="32" height="32" viewBox="0 0 32 32"><use href="#chrome"/><circle cx="23" cy="23" r="9" fill="#4d7fd6"/><circle cx="23" cy="23" r="6.500" fill="none" stroke="#dce8ff" stroke-width="1.300"/><circle cx="23" cy="21" r="2.500" fill="#fff"/><path d="M18.500 27q4.500-4 9 0" stroke="#fff" stroke-width="2" fill="none"/></svg></button>
  <button class="tool app open" aria-label="Zoom"><svg width="30" height="30" viewBox="0 0 30 30"><rect width="30" height="30" rx="13" fill="#0b5cff"/><text x="15" y="18" text-anchor="middle" font-size="9" font-weight="600" fill="#fff">zoom</text><circle cx="25" cy="26" r="5" fill="#f5333f"/></svg></button>
  <button class="tool app open" aria-label="Notepad"><svg width="28" height="28" viewBox="0 0 28 28"><path d="M10 1l15 2 2 22-5 3z" fill="#b4ac98"/><path d="M9 1l14 2-5 21-17-2z" fill="#8cc4cf"/><path d="M9 1l14 2-3 10-15-2z" fill="#d3ecef"/></svg></button>
  <button class="tool app open" aria-label="Excel"><svg width="30" height="30" viewBox="0 0 30 30"><path d="M8 1h22v28H8z" fill="#21a366"/><path d="M19 1h11v9H19z" fill="#33c481"/><path d="M8 10h11v9H8z" fill="#107c41"/><path d="M8 19h22v10H8z" fill="#185c37"/><path d="M19 19h11v10H19z" fill="#107c41"/><rect y="8" width="15" height="15" rx="1" fill="#107c41"/><path d="M4.500 11l6 9M10.500 11l-6 9" stroke="#fff" stroke-width="2"/></svg></button>
  <button class="tool app open now" aria-label="Word"><svg width="30" height="30"><use href="#word"/></svg></button>
  <button class="tool app open" aria-label="Outlook"><svg width="30" height="30" viewBox="0 0 30 30"><path d="M8 1h21v28H8z" fill="#0f6cbd"/><path d="M8 7h11v7H8z" fill="#28a8ea"/><path d="M19 7h10v7H19z" fill="#50d9ff"/><path d="M7 18l11 5 12-7v13H8z" fill="#1490df"/><rect y="8" width="15" height="15" rx="1" fill="#0f64b8"/><ellipse cx="7.500" cy="15.500" rx="3.500" ry="4" fill="none" stroke="#fff" stroke-width="2"/></svg></button>
  <button class="tool app open" aria-label="Chrome, second profile"><svg width="32" height="32" viewBox="0 0 32 32"><use href="#chrome"/><circle cx="23" cy="23" r="9" fill="#e0694f"/><circle cx="23" cy="23" r="6.500" fill="none" stroke="#ffe0d8" stroke-width="1.300"/><circle cx="23" cy="21" r="2.500" fill="#fff"/><path d="M18.500 27q4.500-4 9 0" stroke="#fff" stroke-width="2" fill="none"/></svg></button>
  <div class="tray d-flex align-items-center ms-auto">
    <button class="tool weather"><svg width="30" height="32" viewBox="0 0 30 32"><path d="M1 17Q2 6 13 5q11 1 12 12-3-2-6 0-3-2-6 0-3-2-6 0-3-2-6 0z" fill="#6db5f2"/><path d="M13 16v12q0 3-3 3t-3-3" fill="none" stroke="#a8b4bd" stroke-width="2"/><path d="M15 1l-1 2M20 0l-2 4M26 1l-2 3M23 7l-1 2M29 7l-2 4M28 13l-1 2" stroke="#a5c8ea" stroke-width="2"/></svg>2 cm of rain Tue</button>
    <button class="tool me-2" aria-label="Hidden icons"><svg width="17" height="10"><path d="M1 9l7.500-8L16 9" fill="none" stroke="#fff" stroke-width="1.500"/></svg></button>
    <button class="tool ms-1" aria-label="OneDrive"><svg width="21" height="14" viewBox="0 0 21 14"><path d="M5 14a5 5 0 0 1-1-9.500A6 6 0 0 1 15 4a5 5 0 0 1 2 10z" fill="#1e90e0"/><path d="M4 4.500A6 6 0 0 1 15 4L9 8z" fill="#0f64b8"/></svg></button>
    <button class="tool ms-2" aria-label="Updates"><svg width="21" height="20" viewBox="0 0 21 20"><path d="M1 3l19-2v16H1z" fill="none" stroke="#fff" stroke-width="1.500"/><path d="M6 9q2-4 6-3M13 3v3.500h-3M12 11q-1 4-6 3M6 16v-4" fill="none" stroke="#fff" stroke-width="1.500"/><circle cx="15.500" cy="15.500" r="5" fill="#e81224"/></svg></button>
    <button class="tool ms-2 ps-1" aria-label="Battery"><svg width="20" height="14" viewBox="0 0 20 14"><path d="M6 3.500h12v8H6zM18 6h2v3h-2z" fill="#fff"/><path d="M0 3h6M1 3v3h4V3M2 0v3M4 0v3M3 6v7.500h15.500V2H7" stroke="#fff" fill="none"/></svg></button>
    <button class="tool ms-3" aria-label="Network"><svg width="16" height="18" viewBox="0 0 16 18" fill="none" stroke="#fff" stroke-width="1.400"><path d="M1 16Q1 3 15 1" stroke="#aaa"/><path d="M5 16Q5 7 15 5M9 16q0-6 6-7M12 17q0-3 3-4"/></svg></button>
    <button class="tool ms-2" aria-label="Volume"><svg width="20" height="18" viewBox="0 0 20 18" fill="none" stroke="#fff" stroke-width="1.400"><path d="M1 6h3l4-4v14l-4-4H1zM10.500 6q2 3 0 6M13 4q3.500 5 0 10"/><path d="M16 2q5 7 0 14" stroke="#777"/></svg></button>
    <div class="clock">12:27 AM<br>7/11/2025</div>
    <button class="tool position-relative bell" aria-label="Notifications"><svg width="20" height="20" viewBox="0 0 20 20"><path d="M0 0h20v16H8l-4 4v-4H0z" fill="#fff"/><path d="M4 4.500h12M4 8h12M4 11.500h12" stroke="#1c1c1c" stroke-width="1.400"/></svg><span class="note-count position-absolute">2</span></button>
  </div>
</footer>
</body>
</html>
